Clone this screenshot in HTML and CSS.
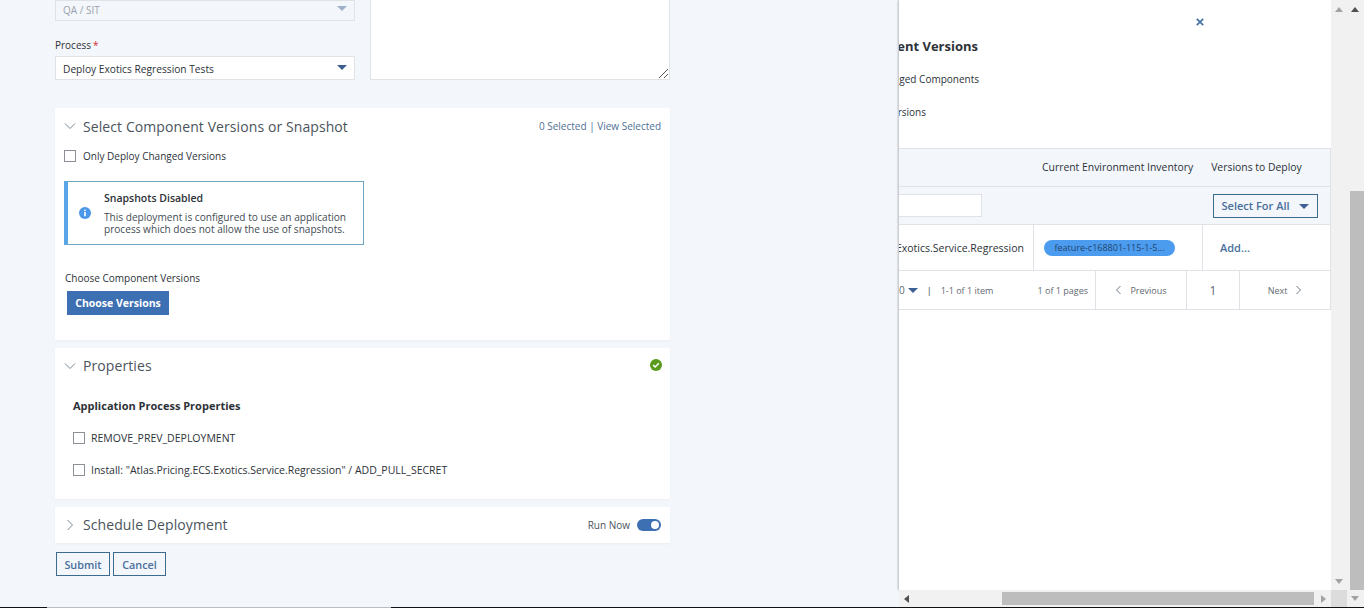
FILE: index.html
```html
<!DOCTYPE html>
<html lang="en">
<head>
    <meta charset="UTF-8">
    <title>Deploy</title>
    <link rel="stylesheet" href="styles.css">
</head>
<body>
    <main class="form">
        <div class="top-row">
            <div class="top-fields">
                <div class="select select-off">QA / SIT <span class="caret"></span></div>
                <label class="field-label">Process<span class="req">*</span></label>
                <div class="select select-process">Deploy Exotics Regression Tests <span class="caret"></span></div>
            </div>
            <div class="textarea">
                <svg class="grip" width="9" height="9" viewBox="0 0 9 9"><path d="M0 9 9 0M5 9 9 5" stroke="#555" fill="none"/></svg>
            </div>
        </div>

        <section class="card card-versions">
            <div class="card-head">
                <svg class="chev" width="12" height="12" viewBox="0 0 12 12"><path d="M1 3.5 6 8.5 11 3.5" stroke="#7b8794" fill="none"/></svg>
                <h2>Select Component Versions or Snapshot</h2>
                <span class="head-links">0 Selected | View Selected</span>
            </div>
            <label class="check check-first"><span class="box"></span>Only Deploy Changed Versions</label>
            <div class="notice">
                <svg class="notice-icon" width="12" height="12" viewBox="0 0 12 12"><circle cx="6" cy="6" r="6" fill="#4b97ea"/><rect x="5.2" y="5" width="1.6" height="4.2" fill="#fff"/><rect x="5.2" y="2.6" width="1.6" height="1.5" fill="#fff"/></svg>
                <div class="notice-text">
                    <h3>Snapshots Disabled</h3>
                    <p>This deployment is configured to use an application process which does not allow the use of snapshots.</p>
                </div>
            </div>
            <div class="choose-label">Choose Component Versions</div>
            <button class="btn-primary">Choose Versions</button>
        </section>

        <section class="card card-props">
            <div class="card-head">
                <svg class="chev" width="12" height="12" viewBox="0 0 12 12"><path d="M1 3.5 6 8.5 11 3.5" stroke="#7b8794" fill="none"/></svg>
                <h2>Properties</h2>
                <svg class="ok" width="12" height="12" viewBox="0 0 12 12"><circle cx="6" cy="6" r="6" fill="#5a9a1c"/><path d="M3.2 6.2 5.2 8 8.8 4.2" stroke="#fff" stroke-width="1.6" fill="none"/></svg>
            </div>
            <h4>Application Process Properties</h4>
            <label class="check check-prop"><span class="box"></span>REMOVE_PREV_DEPLOYMENT</label>
            <label class="check check-prop"><span class="box"></span>Install: "Atlas.Pricing.ECS.Exotics.Service.Regression" / ADD_PULL_SECRET</label>
        </section>

        <section class="card card-schedule">
            <div class="card-head">
                <svg class="chev" width="12" height="12" viewBox="0 0 12 12"><path d="M3.5 1 8.5 6 3.5 11" stroke="#7b8794" fill="none"/></svg>
                <h2>Schedule Deployment</h2>
                <span class="run-now">Run Now</span>
                <span class="toggle"></span>
            </div>
        </section>

        <div class="actions">
            <button class="btn-outline btn-submit">Submit</button>
            <button class="btn-outline btn-cancel">Cancel</button>
        </div>
    </main>

    <aside class="drawer">
        <div class="drawer-top">
            <svg class="close" width="8" height="8" viewBox="0 0 8 8"><path d="M.8.8 7.2 7.2M7.2.8.8 7.2" stroke="#4a76a8" stroke-width="1.8"/></svg>
            <div class="clip clip-title">Select Component Versions</div>
            <div class="clip clip-opt1">Show Changed Components</div>
            <div class="clip clip-opt2">All Versions</div>
        </div>
        <div class="table">
            <div class="row row-head">
                <span class="th-inventory">Current Environment Inventory</span>
                <span class="th-deploy">Versions to Deploy</span>
            </div>
            <div class="row row-filter">
                <div class="filter-input"></div>
                <button class="select-all">Select For All <span class="caret"></span></button>
            </div>
            <div class="row row-data">
                <div class="td td-name"><div class="clip">Atlas.Pricing.ECS.Exotics.Service.Regression</div></div>
                <div class="td td-inv"><span class="pill">feature-c168801-115-1-5...</span></div>
                <div class="td td-add">Add...</div>
            </div>
            <div class="row row-pager">
                <div class="pager-info">
                    <span class="per-page">0</span><span class="caret"></span>
                    <span class="sep">|</span>
                    <span>1-1 of 1 item</span>
                    <span class="pages">1 of 1 pages</span>
                </div>
                <div class="pager-btn pager-prev">
                    <svg width="7" height="10" viewBox="0 0 7 10"><path d="M5.5 1 1.5 5 5.5 9" stroke="#6f7a85" fill="none"/></svg>Previous
                </div>
                <div class="pager-btn pager-num">1</div>
                <div class="pager-btn pager-next">Next
                    <svg width="7" height="10" viewBox="0 0 7 10"><path d="M1.5 1 5.5 5 1.5 9" stroke="#6f7a85" fill="none"/></svg>
                </div>
            </div>
        </div>
    </aside>

    <!-- scrollbars of the drawer and of the page -->
    <div class="sb sb-inner"><i class="arr up"></i><i class="arr down"></i></div>
    <div class="sb sb-outer"><i class="arr up dark"></i><div class="sb-thumb"></div><i class="arr down"></i></div>
    <div class="sb-h"><i class="arr left dark"></i><div class="sb-h-thumb"></div><i class="arr right"></i></div>
    <div class="sb-corner"></div>
    <div class="bottom-line"></div>
</body>
</html>
```

FILE: styles.css
```css
html, body {
    margin: 0;
    padding: 0;
    height: 608px;
    overflow: hidden;
}

body {
    font-family: "Open Sans", Roboto, sans-serif;
    font-size: 10px;
    color: #2c3238;
    background-color: #f3f6fb;
    position: relative;
}

h2, h3, h4, p {
    margin: 0;
}

button {
    font-family: inherit;
    cursor: pointer;
}

.form {
    width: 615px;
    margin-left: 55px;
}

.top-row {
    display: flex;
    height: 80px;
}

.top-fields {
    width: 300px;
}

.select {
    height: 24px;
    line-height: 24px;
    padding-left: 7px;
    box-sizing: border-box;
    background: #fff;
    border: 1px solid #dfe3e8;
    position: relative;
}

.select-process {
    font-size: 10.2px;
}

.select-off {
    height: 21px;
    line-height: 19px;
    color: #9aa3ac;
    background: #f3f6fb;
}

.caret {
    display: inline-block;
    width: 0;
    height: 0;
    border-left: 5px solid transparent;
    border-right: 5px solid transparent;
    border-top: 5px solid #3d5f94;
}

.select .caret {
    position: absolute;
    right: 7px;
    top: 8px;
}

.select-off .caret {
    border-top-color: #9fb0c8;
    top: 5px;
}

.field-label {
    display: block;
    margin-top: 17px;
    height: 18px;
    line-height: 15px;
}

.req {
    color: #d0312d;
    margin-left: 2px;
}

.textarea {
    flex: 1;
    margin-left: 15px;
    background: #fff;
    border: 1px solid #dfe3e8;
    border-top: 0;
    box-sizing: border-box;
    position: relative;
}

.grip {
    position: absolute;
    right: 1px;
    bottom: 1px;
}

.card {
    background: #fff;
    box-shadow: 0 1px 2px rgba(0, 0, 0, 0.04);
    margin-bottom: 8px;
    box-sizing: border-box;
}

.card-versions {
    margin-top: 28px;
    height: 232px;
}

.card-props {
    height: 151px;
}

.card-schedule {
    height: 36px;
    margin-bottom: 9px;
}

.card-head {
    display: flex;
    align-items: center;
    height: 36px;
    padding: 0 9px;
}

.chev {
    flex: none;
    margin-right: 7px;
}

.card-head h2 {
    font-size: 14px;
    font-weight: 400;
    color: #4b545c;
    letter-spacing: 0.09px;
    flex: 1;
}

.card-props h2, .card-schedule h2 {
    padding-bottom: 2px;
}

.head-links {
    color: #4f7096;
}

.check {
    display: flex;
    align-items: center;
}

.box {
    width: 10px;
    height: 10px;
    border: 1px solid #8a9096;
    margin-right: 7px;
    flex: none;
    background: #fff;
}

.check-first {
    margin: 5px 0 0 9px;
    height: 14px;
}

.notice {
    display: flex;
    align-items: center;
    width: 295px;
    height: 62px;
    margin: 18px 0 0 9px;
    border: 1px solid #6fa6c4;
    border-left: 4px solid #5aa5e8;
}

.notice-icon {
    flex: none;
    margin: 0 13px 0 11px;
}

.notice-text {
    padding-bottom: 1px;
}

.notice h3 {
    font-size: 10.5px;
    font-weight: 600;
    margin-bottom: 6px;
}

.notice p {
    font-size: 10.1px;
    line-height: 12px;
    color: #444c54;
}

.choose-label {
    margin: 27px 0 0 10px;
    height: 13px;
    line-height: 13px;
}

.btn-primary {
    display: block;
    margin: 6px 0 0 12px;
    width: 102px;
    height: 24px;
    border: 0;
    color: #fff;
    font-size: 10.5px;
    font-weight: 700;
    background-color: #3d70b2;
}

.ok {
    margin-right: -1px;
    margin-bottom: 2px;
}

.card-props h4 {
    font-size: 11px;
    font-weight: 700;
    margin: 15px 0 0 18px;
    line-height: 14px;
}

.check-prop {
    margin-left: 18px;
    height: 14px;
    font-size: 10.5px;
}

.check-prop .box {
    margin-right: 6px;
}

.card-props h4 + .check-prop {
    margin-top: 18px;
}

.check-prop + .check-prop {
    margin-top: 18px;
}

.run-now {
    color: #4b545c;
    margin-right: 7px;
}

.toggle {
    width: 24px;
    height: 12px;
    border-radius: 6px;
    background: #3d70b2;
    position: relative;
}

.toggle::after {
    content: "";
    position: absolute;
    right: 2px;
    top: 2px;
    width: 8px;
    height: 8px;
    border-radius: 50%;
    background: #fff;
}

.actions {
    display: flex;
    gap: 3px;
    padding-left: 1px;
}

.btn-outline {
    height: 24px;
    padding: 0;
    background: transparent;
    border: 1px solid #3b6b8f;
    color: #4a6f9c;
    font-size: 10.8px;
    font-weight: 600;
}

.btn-submit {
    width: 54px;
}

.btn-cancel {
    width: 53px;
}

/* drawer lies over the page */
.drawer {
    position: absolute;
    left: 899px;
    top: 0;
    width: 432px;
    height: 590px;
    background: #fff;
    box-shadow: -1px 0 2px rgba(0, 0, 0, 0.25);
    overflow: hidden;
}

.drawer-top {
    height: 149px;
    position: relative;
    border-bottom: 1px solid #dfe3e8;
    box-sizing: border-box;
}

.close {
    position: absolute;
    left: 297px;
    top: 18px;
}

.clip {
    display: flex;
    justify-content: flex-end;
    overflow: hidden;
    white-space: nowrap;
}

.clip-title {
    position: absolute;
    left: 0;
    top: 37px;
    width: 79px;
    font-size: 13px;
    font-weight: 700;
}

.clip-opt1 {
    position: absolute;
    left: 0;
    top: 72px;
    width: 80px;
}

.clip-opt2 {
    position: absolute;
    left: 0;
    top: 105px;
    width: 27px;
}

.table {
    width: 431px;
    border-right: 1px solid #dfe3e8;
}

.row {
    display: flex;
    align-items: center;
    box-sizing: border-box;
    border-bottom: 1px solid #dfe3e8;
}

.row-head {
    height: 38px;
    padding-bottom: 2px;
    background: #f3f6fb;
    font-size: 10.4px;
    font-weight: 500;
}

.th-inventory {
    margin-left: 143px;
}

.th-deploy {
    margin-left: 18px;
}

.row-filter {
    height: 38px;
    background: #f3f6fb;
    justify-content: space-between;
}

.filter-input {
    width: 83px;
    height: 23px;
    background: #fff;
    border: 1px solid #dfe3e8;
    border-left: 0;
    box-sizing: border-box;
}

.select-all {
    width: 105px;
    height: 24px;
    margin-right: 12px;
    padding: 0;
    background: transparent;
    border: 1px solid #3b6b8f;
    color: #4a6f9c;
    font-size: 11px;
    font-weight: 600;
}

.select-all .caret {
    margin-left: 7px;
    vertical-align: 1px;
}

.row-data {
    height: 46px;
    align-items: stretch;
}

.td {
    display: flex;
    align-items: center;
    box-sizing: border-box;
}

.td-name {
    width: 134px;
    justify-content: flex-end;
    padding-right: 9px;
}

.td-name .clip {
    width: 125px;
    font-size: 10.5px;
}

.td-inv {
    width: 169px;
    border-left: 1px solid #dfe3e8;
    padding-left: 10px;
}

.pill {
    width: 131px;
    height: 16px;
    line-height: 16px;
    border-radius: 8px;
    background: #4b9bee;
    color: #24466e;
    font-size: 9px;
    text-align: center;
    white-space: nowrap;
    overflow: hidden;
}

.td-add {
    flex: 1;
    border-left: 1px solid #dfe3e8;
    padding-left: 17px;
    font-size: 11px;
    font-weight: 600;
    color: #4a6f9c;
}

.row-pager {
    height: 39px;
    align-items: stretch;
    color: #5f6972;
    font-size: 9px;
}

.pager-info {
    width: 196px;
    display: flex;
    align-items: center;
}

.per-page {
    margin-right: 3px;
    font-size: 10px;
}

.pager-info .caret {
    margin-right: 9px;
}

.sep {
    margin-right: 9px;
    color: #333;
}

.pages {
    margin-left: auto;
    padding-right: 7px;
}

.pager-btn {
    display: flex;
    align-items: center;
    justify-content: center;
    gap: 8px;
    border-left: 1px solid #dfe3e8;
    box-sizing: border-box;
}

.pager-prev {
    width: 91px;
}

.pager-num {
    width: 53px;
    font-size: 12px;
}

.pager-next {
    width: 91px;
}

/* fake browser scrollbars */
.sb {
    position: absolute;
    top: 0;
    width: 16px;
    background: #f1f1f1;
}

.sb-inner {
    left: 1331px;
    height: 590px;
}

.sb-outer {
    left: 1347px;
    width: 17px;
    height: 607px;
}

.sb-thumb {
    position: absolute;
    left: 3px;
    top: 191px;
    width: 14px;
    height: 399px;
    background: #bdbdbd;
}

.sb-h {
    position: absolute;
    left: 899px;
    top: 590px;
    width: 432px;
    height: 17px;
    background: #f1f1f1;
}

.sb-h-thumb {
    position: absolute;
    left: 103px;
    top: 2px;
    width: 312px;
    height: 13px;
    background: #bdbdbd;
}

.sb-corner {
    position: absolute;
    left: 1331px;
    top: 590px;
    width: 16px;
    height: 17px;
    background: #dcdcdc;
}

.arr {
    position: absolute;
    width: 0;
    height: 0;
    border: 4px solid transparent;
}

.up {
    left: 4px;
    top: 7px;
    border-top: 0;
    border-bottom: 5px solid #a3a3a3;
}

.up.dark {
    border-bottom-color: #505050;
}

.down {
    left: 4px;
    bottom: 6px;
    border-bottom: 0;
    border-top: 5px solid #a3a3a3;
}

.left {
    left: 5px;
    top: 5px;
    border-left: 0;
    border-right: 5px solid #505050;
}

.right {
    right: 5px;
    top: 5px;
    border-right: 0;
    border-left: 5px solid #a3a3a3;
}

.bottom-line {
    position: absolute;
    left: 0;
    right: 0;
    top: 607px;
    height: 1px;
    background: linear-gradient(to right, #111 47px, #b7bdc2 47px, #b7bdc2 391px, #111 391px);
}
```
